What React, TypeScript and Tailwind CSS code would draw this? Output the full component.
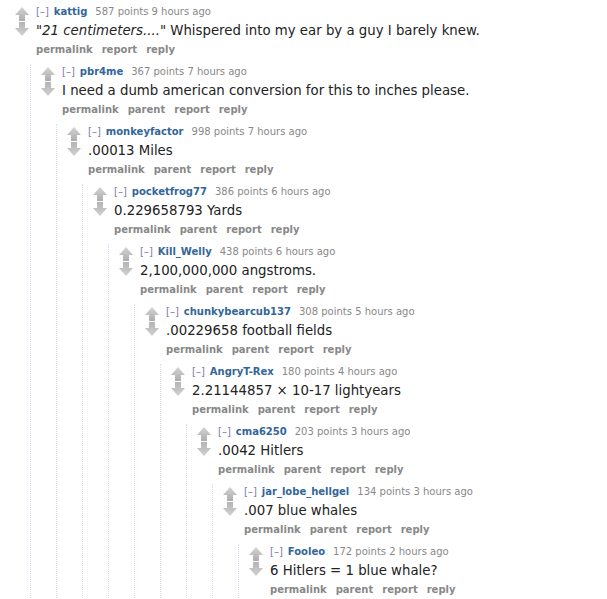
type Comment = {
  author: string;
  points: number;
  age: string;
  body: React.ReactNode;
  parent?: boolean;
};

const comments: Comment[] = [
  {
    author: "kattig",
    points: 587,
    age: "9 hours",
    body: (
      <>
        <em>"21 centimeters...."</em> Whispered into my ear by a guy I barely knew.
      </>
    ),
  },
  { author: "pbr4me", points: 367, age: "7 hours", body: "I need a dumb american conversion for this to inches please.", parent: true },
  { author: "monkeyfactor", points: 998, age: "7 hours", body: ".00013 Miles", parent: true },
  { author: "pocketfrog77", points: 386, age: "6 hours", body: "0.229658793 Yards", parent: true },
  { author: "Kill_Welly", points: 438, age: "6 hours", body: "2,100,000,000 angstroms.", parent: true },
  { author: "chunkybearcub137", points: 308, age: "5 hours", body: ".00229658 football fields", parent: true },
  { author: "AngryT-Rex", points: 180, age: "4 hours", body: "2.21144857 × 10-17 lightyears", parent: true },
  { author: "cma6250", points: 203, age: "3 hours", body: ".0042 Hitlers", parent: true },
  { author: "jar_lobe_hellgel", points: 134, age: "3 hours", body: ".007 blue whales", parent: true },
  { author: "Fooleo", points: 172, age: "2 hours", body: "6 Hitlers = 1 blue whale?", parent: true },
];

function Arrow({ down }: { down?: boolean }) {
  const id = down ? "gd" : "gu";
  return (
    <svg width="14" height="14" viewBox="0 0 14 14" className="block">
      <defs>
        <linearGradient id={id} x1="0" y1="0" x2="0" y2="1">
          <stop offset="0" stopColor={down ? "#b4b4b4" : "#d4d4d4"} />
          <stop offset="1" stopColor={down ? "#d0d0d0" : "#adadad"} />
        </linearGradient>
      </defs>
      {down ? (
        <path d="M4 0 H10 V6 H14 L7 14 L0 6 H4 Z" fill={`url(#${id})`} />
      ) : (
        <path d="M7 0 L14 8 H10 V14 H4 V8 H0 Z" fill={`url(#${id})`} />
      )}
    </svg>
  );
}

function CommentNode({ index }: { index: number }) {
  const c = comments[index];
  const hasChild = index + 1 < comments.length;
  return (
    <div className="flex">
      <div className="ml-[10px] mr-[7px] flex w-[14px] shrink-0 flex-col gap-[1px] pt-[3px]">
        <Arrow />
        <Arrow down />
      </div>
      <div className="min-w-0 flex-1">
        <div className="flex h-[14px] items-center whitespace-nowrap text-[10px]">
          <span className="text-[#7b7ba8]">[–]</span>
          <span className="ml-[5px] font-bold text-[#336699]">{c.author}</span>
          <span className="ml-[8px] text-[#888]">
            {c.points} points {c.age} ago
          </span>
        </div>
        <div className="mt-[3px] flex h-[20px] items-center whitespace-nowrap text-[13.3px] text-[#222]">
          <span>{c.body}</span>
        </div>
        <div className="flex h-[17px] items-center gap-[9px] text-[10px] font-bold text-[#888]">
          <span>permalink</span>
          {c.parent && <span>parent</span>}
          <span>report</span>
          <span>reply</span>
        </div>
        {hasChild && (
          <div className="-ml-[6px] mt-[6px] border-l border-dotted border-[#dcdcf4] pt-[2px]">
            <div className="-mt-[2px]">
              <CommentNode index={index + 1} />
            </div>
          </div>
        )}
      </div>
    </div>
  );
}

export default function App() {
  return (
    <div
      className="h-[599px] w-[607px] overflow-hidden bg-white pl-[5px] pt-[4px]"
      style={{ fontFamily: '"DejaVu Sans", Verdana, sans-serif' }}
    >
      <CommentNode index={0} />
    </div>
  );
}
